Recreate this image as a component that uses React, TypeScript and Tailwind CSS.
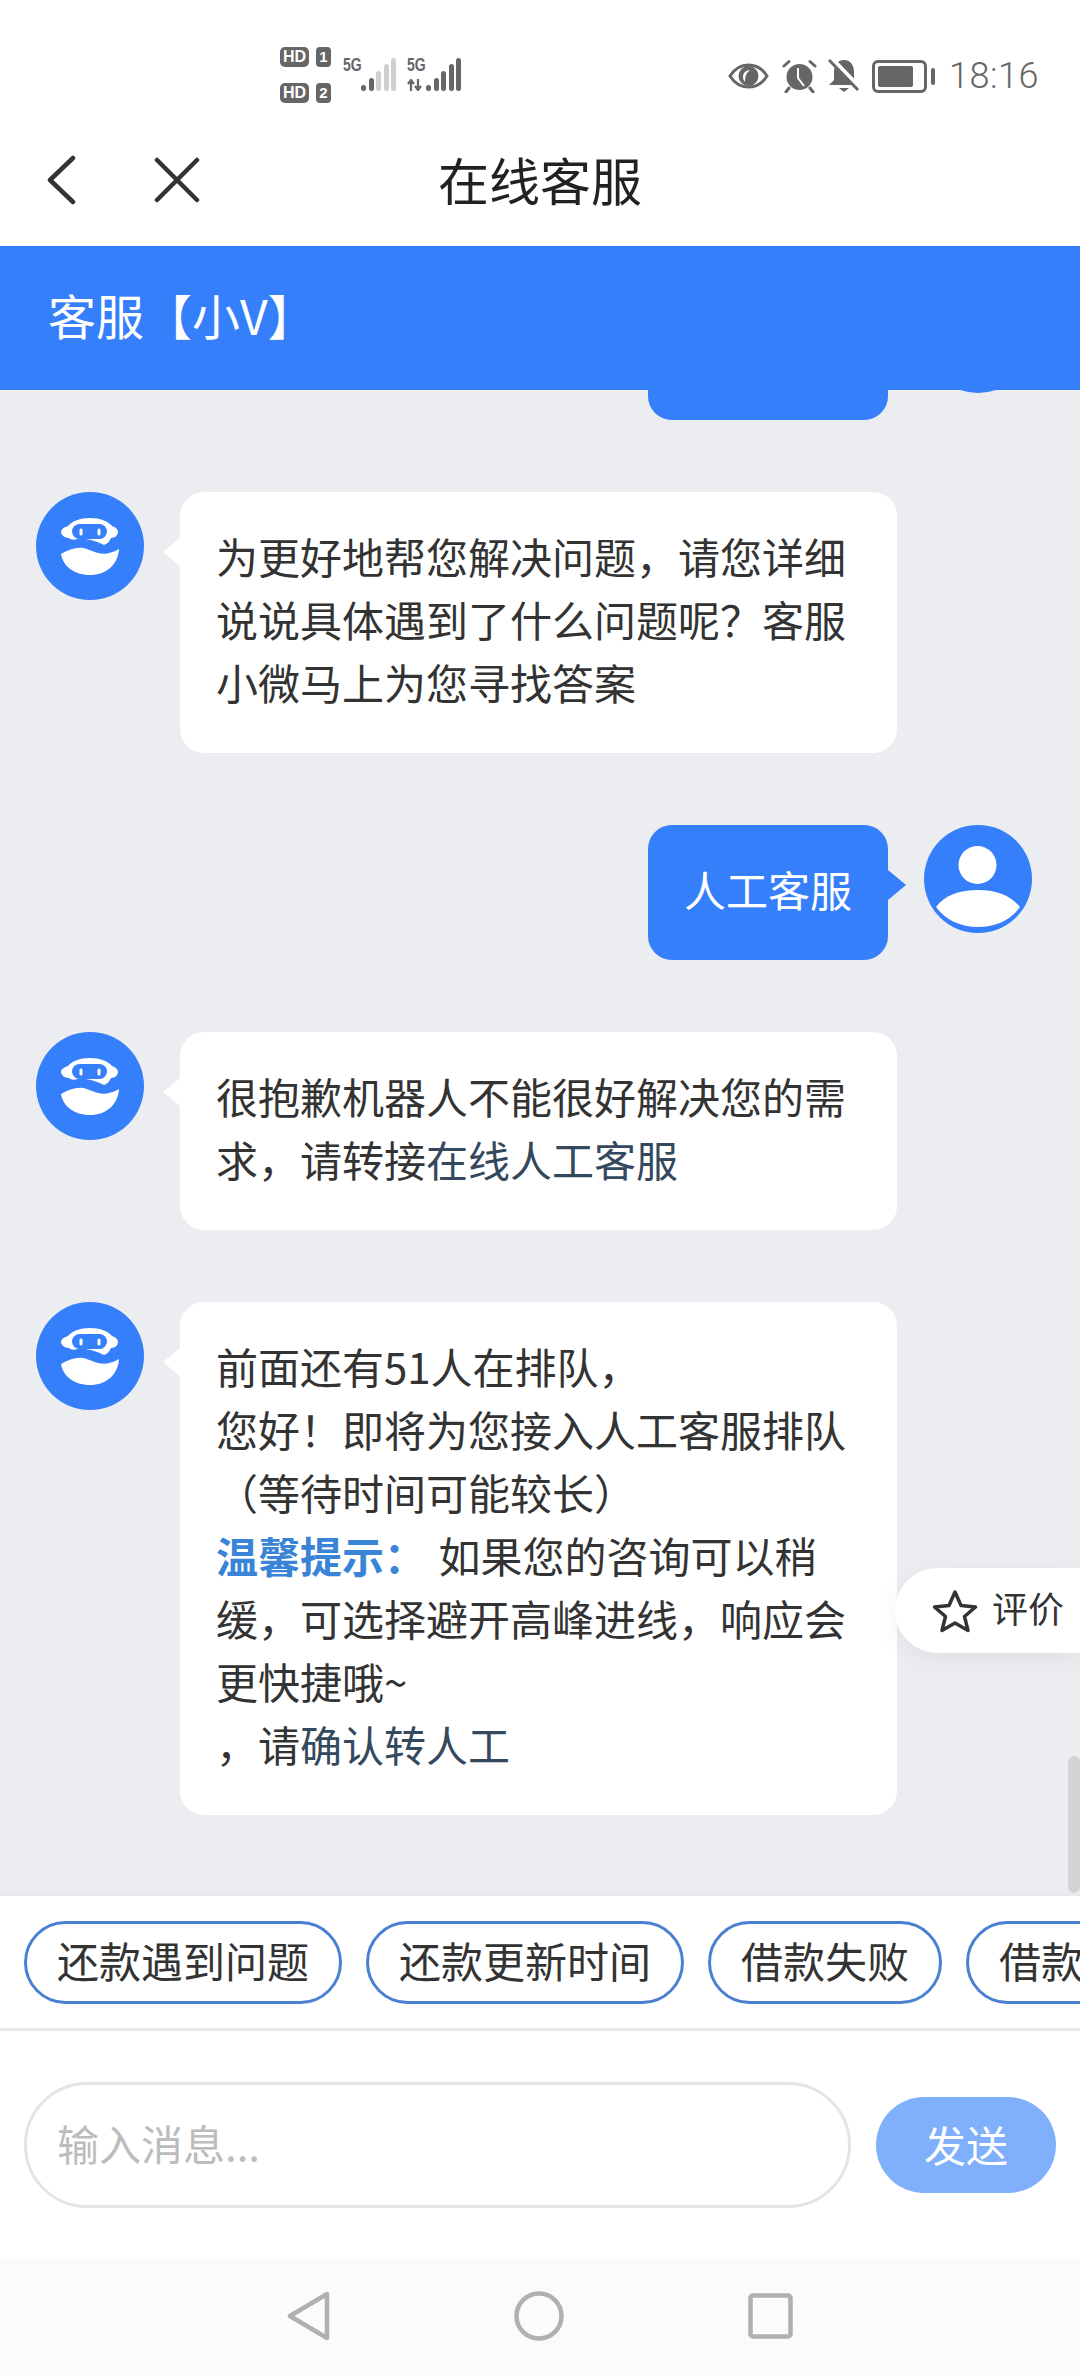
import React from "react";

const FONT = "font-['Noto_Sans_CJK_SC','Noto_Sans',sans-serif]";

function BotAvatar() {
  return (
    <div className="w-[108px] h-[108px] rounded-full bg-[#367ffb] shrink-0">
      <svg width="108" height="108" viewBox="0 0 108 108">
        <path d="M33 46C29 46 25 43 25 40 25 37 29 35 32 34 36 29 44 26 54 26 64 26 72 29 76 34 79 35 82 37 82 40 82 43 79 46 75 46 73 50 71 52 68 53 60 49 50 46 42 47 38 48 35 48 33 46Z" fill="#fff" />
        <rect x="36" y="32" width="35" height="15" rx="7.500" fill="#367ffb" />
        <rect x="43.500" y="36.500" width="3" height="7" rx="1.500" fill="#fff" />
        <rect x="61.500" y="36.500" width="3" height="7" rx="1.500" fill="#fff" />
        <path d="M25 62C32 58 40 55 47 56 57 58 66 67 83 57 82 73 70 83 54 83 38 83 27 74 25 62Z" fill="#fff" />
      </svg>
    </div>
  );
}

function UserAvatar() {
  return (
    <div className="w-[108px] h-[108px] rounded-full bg-[#367ffb] shrink-0">
      <svg width="108" height="108" viewBox="0 0 108 108">
        <circle cx="53.500" cy="40" r="19" fill="#fff" />
        <path d="M12 82c9-12 24-17 42-17s32 5 42 17c-9 13-25 20-42 20s-33-7-42-20z" fill="#fff" />
      </svg>
    </div>
  );
}

function BotBubble({ children }: { children: React.ReactNode }) {
  return (
    <div className="flex items-start">
      <BotAvatar />
      <div className="relative ml-[36px] w-[717px] bg-white rounded-[24px] px-[36px] pt-[32px] pb-[40px] text-[42px] leading-[63px] text-[#333333]">
        <div className="absolute left-[-17px] top-[45px] w-0 h-0 border-y-[15px] border-y-transparent border-r-[18px] border-r-white" />
        {children}
      </div>
    </div>
  );
}

function UserBubble({ text }: { text: string }) {
  return (
    <div className="flex items-start justify-end">
      <div className="relative w-[240px] bg-[#367ffb] rounded-[24px] pt-[32px] pb-[40px] text-center text-[42px] leading-[63px] text-white">
        {text}
        <div className="absolute right-[-18px] top-[45px] w-0 h-0 border-y-[15px] border-y-transparent border-l-[18px] border-l-[#367ffb]" />
      </div>
      <div className="ml-[36px]">
        <UserAvatar />
      </div>
    </div>
  );
}

function Link({ children }: { children: React.ReactNode }) {
  return <span className="text-[#34495e]">{children}</span>;
}

function Bars({ dim }: { dim: boolean }) {
  const bars = [6, 13, 20, 27, 33];
  return (
    <div className="flex items-end gap-[2.500px] h-[33px]">
      {bars.map((h, i) => (
        <div key={i} style={{ height: h }} className={`w-[5px] rounded-[2.500px] ${dim && i >= 2 ? "bg-[#cfcfcf]" : "bg-[#666666]"}`} />
      ))}
    </div>
  );
}

function FiveG() {
  return (
    <div className="w-[17px] h-[14px] text-[#666666] text-[18px] leading-[14px] font-bold font-['Liberation_Sans',sans-serif] origin-left scale-x-[0.78] whitespace-nowrap">
      5G
    </div>
  );
}

function StatusLeft() {
  return (
    <div className="flex items-start">
      <div className="flex flex-col gap-[16px]">
        {["1", "2"].map((n) => (
          <div key={n} className="flex gap-[7px]">
            <div className="w-[29px] h-[20px] rounded-[5px] bg-[#666666] text-white text-[16px] leading-[20px] font-bold text-center font-['Liberation_Sans',sans-serif]">HD</div>
            <div className="w-[15px] h-[20px] rounded-[4px] bg-[#666666] text-white text-[15px] leading-[20px] font-bold text-center font-['Liberation_Sans',sans-serif]">{n}</div>
          </div>
        ))}
      </div>
      <div className="ml-[12px] mt-[11px] flex items-start">
        <FiveG />
        <div className="ml-[1px]">
          <Bars dim />
        </div>
      </div>
      <div className="ml-[11px] mt-[11px] flex items-start">
        <div className="w-[17px] h-[33px] flex flex-col justify-between">
          <FiveG />
          <svg width="17" height="12" viewBox="0 0 17 12">
            <path d="M4 12V2M1 5l3-4 3 4" fill="none" stroke="#666" strokeWidth="2.200" />
            <path d="M11 0v10M8 7l3 4 3-4" fill="none" stroke="#666" strokeWidth="2.200" />
          </svg>
        </div>
        <div className="ml-[2px]">
          <Bars dim={false} />
        </div>
      </div>
    </div>
  );
}

function StatusRight() {
  return (
    <div className="flex items-center h-[34px]">
      <svg width="41" height="26" viewBox="0 0 41 26" className="mr-[13px]">
        <path d="M2 13C7 5 13 2 20.500 2S34 5 39 13C34 21 28 24 20.500 24S7 21 2 13z" fill="none" stroke="#666" strokeWidth="3" />
        <circle cx="20.500" cy="13" r="10" fill="#666" />
        <path d="M22 7c-4 0-7 3-7 7 0 2 1 4 2 5 0-5 1-9 5-12z" fill="#fff" />
      </svg>
      <svg width="35" height="34" viewBox="0 0 35 34" className="mr-[11px]">
        <circle cx="17.500" cy="18" r="13" fill="#666" />
        <path d="M16 9v10l6 8" fill="none" stroke="#fff" strokeWidth="2" />
        <path d="M2 7l5-4.500M33 7l-5-4.500M7 29l-3 4M28 29l3 4" stroke="#666" strokeWidth="3" strokeLinecap="round" />
      </svg>
      <svg width="32" height="34" viewBox="0 0 32 34" className="mr-[12px]">
        <path d="M16 1c7 0 10 6 10 12v8l5 5H1l5-5v-8C6 7 9 1 16 1z" fill="#666" />
        <path d="M11 29h10l-5 4z" fill="#666" />
        <path d="M3 0l29 30" stroke="#fff" strokeWidth="6" />
        <path d="M1 1l29 30" stroke="#666" strokeWidth="3" />
      </svg>
      <div className="w-[55px] h-[33px] rounded-[6px] border-[3px] border-[#666666] p-[3px]">
        <div className="w-[35px] h-full bg-[#666666] rounded-[2px]" />
      </div>
      <div className="ml-[4px] w-[4px] h-[17px] rounded-[2px] bg-[#666666]" />
      <div className="ml-[14px] text-[36px] leading-[40px] text-[#666666] font-['Roboto',sans-serif] font-light tracking-[0.5px]">18:16</div>
    </div>
  );
}

const chips = ["还款遇到问题", "还款更新时间", "借款失败", "借款进度"];

export default function App() {
  return (
    <div className={`w-[1080px] h-[2376px] flex flex-col bg-white overflow-hidden ${FONT}`}>
      <div className="h-[120px] shrink-0 flex items-start justify-between pl-[280px] pr-[41px] pt-[47px]">
        <StatusLeft />
        <div className="pt-[12px]">
          <StatusRight />
        </div>
      </div>

      <div className="relative h-[126px] shrink-0 flex items-center justify-center pb-[8px]">
        <div className="absolute left-[46px] top-[35px] flex items-center">
          <svg width="30" height="50" viewBox="0 0 30 50">
            <path d="M27 3L4 25l23 22" fill="none" stroke="#333" strokeWidth="4.500" strokeLinecap="round" strokeLinejoin="round" />
          </svg>
          <svg width="46" height="46" viewBox="0 0 46 46" className="ml-[78px]">
            <path d="M3 3l40 40M43 3L3 43" fill="none" stroke="#333" strokeWidth="4.500" strokeLinecap="round" />
          </svg>
        </div>
        <div className="text-[51px] leading-[60px] text-[#222222]">在线客服</div>
      </div>

      <div className="h-[144px] shrink-0 bg-[#367ffb] flex items-center pl-[48px] pb-[8px] text-[48px] leading-[60px] text-white">
        客服【小V】
      </div>

      <div className="relative flex-1 min-h-0 overflow-hidden bg-[#ebedf0]">
        <div className="mt-[-105px] pl-[36px] pr-[48px] flex flex-col gap-[72px]">
          <UserBubble text="人工客服" />
          <BotBubble>
            为更好地帮您解决问题，请您详细说说具体遇到了什么问题呢？客服小微马上为您寻找答案
          </BotBubble>
          <UserBubble text="人工客服" />
          <BotBubble>
            很抱歉机器人不能很好解决您的需求，请转接<Link>在线人工客服</Link>
          </BotBubble>
          <BotBubble>
            <div>前面还有51人在排队，</div>
            <div>您好！即将为您接入人工客服排队</div>
            <div>（等待时间可能较长）</div>
            <div>
              <span className="font-bold text-[#3a84d8] mr-[3px]">温馨提示：</span>
              &nbsp;如果您的咨询可以稍缓，可选择避开高峰进线，响应会更快捷哦~
            </div>
            <div>
              ，请<Link>确认转人工</Link>
            </div>
          </BotBubble>
        </div>

        <div className="absolute right-0 top-[1178px] w-[185px] h-[85px] pl-[37px] rounded-l-full bg-white flex items-center shadow-[0_6px_24px_rgba(0,0,0,0.06)]">
          <svg width="46" height="44" viewBox="0 0 46 44">
            <path d="M23 3l6 13.500 14.500 1.500-11 9.500 3.500 14L23 34l-13 7.500 3.500-14-11-9.500L17 16.500z" fill="none" stroke="#333" strokeWidth="3.500" strokeLinejoin="round" />
          </svg>
          <span className="ml-[14px] mb-[8px] text-[36px] leading-[44px] text-[#333333]">评价</span>
        </div>
        <div className="absolute right-0 bottom-0 w-[12px] h-[137px] rounded-[6px] bg-[#d2d3d6]" />
      </div>

      <div className="h-[138px] shrink-0 border-y-[3px] border-[#e8e9eb] flex items-center gap-[24px] pl-[24px] overflow-hidden bg-white">
        {chips.map((c) => (
          <div key={c} className="shrink-0 h-[83px] px-[30px] pb-[6px] rounded-full border-[3px] border-[#4a80d2] flex items-center text-[42px] text-[#333333]">
            {c}
          </div>
        ))}
      </div>

      <div className="h-[227px] shrink-0 flex items-start pl-[24px] pt-[51px] bg-white">
        <div className="w-[827px] h-[126px] rounded-full border-[3px] border-[#e4e4e4] flex items-center pl-[30px] pb-[6px] text-[42px] text-[#bcbcbc]">
          输入消息...
        </div>
        <div className="ml-[25px] mt-[15px] w-[180px] h-[96px] rounded-full bg-[#80b0fb] flex items-center justify-center pb-[4px] text-[42px] text-white">
          发送
        </div>
      </div>

      <div className="h-[118px] shrink-0 bg-[#fbfbfb] flex items-center justify-center gap-[184px] pb-[2px]">
        <svg width="43" height="50" viewBox="0 0 43 50">
          <path d="M40 3v44L3 25z" fill="none" stroke="#b0b0b0" strokeWidth="4.500" strokeLinejoin="round" />
        </svg>
        <svg width="50" height="50" viewBox="0 0 50 50">
          <circle cx="25" cy="25" r="22.500" fill="none" stroke="#b0b0b0" strokeWidth="4.500" />
        </svg>
        <svg width="45" height="46" viewBox="0 0 45 46">
          <rect x="2.500" y="2.500" width="40" height="41" rx="2.500" fill="none" stroke="#b0b0b0" strokeWidth="4.500" />
        </svg>
      </div>
    </div>
  );
}
